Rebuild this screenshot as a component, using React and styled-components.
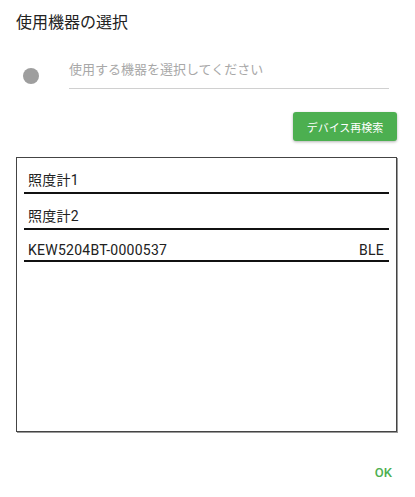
import React from 'react'
import styled, { createGlobalStyle } from 'styled-components'

const GlobalStyle = createGlobalStyle`
  html, body {
    margin: 0;
    padding: 0;
    background: #fff;
  }
  body {
    font-family: Roboto, "Noto Sans CJK JP", sans-serif;
    color: #212121;
  }
`

const Dialog = styled.div`
  width: 415px;
  height: 497px;
  box-sizing: border-box;
  padding: 0 18px 0 16px;
  display: flex;
  flex-direction: column;
`

const Title = styled.h2`
  margin: 0;
  padding-top: 12px;
  font-size: 16px;
  font-weight: 400;
  line-height: 22px;
  color: #222;
`

const PickerRow = styled.div`
  display: flex;
  align-items: center;
  margin-top: 21px;
  padding-left: 7px;
`

const Dot = styled.span`
  width: 16px;
  height: 16px;
  border-radius: 50%;
  background: #9e9e9e;
  flex: none;
  margin-top: 8px;
`

const Picker = styled.div`
  flex: 1;
  margin-left: 30px;
  margin-right: 8px;
  padding: 6px 0 9px;
  border-bottom: 1px solid #d0d0d0;
  font-size: 13px;
  line-height: 18px;
  color: #a8a8a8;
`

const Actions = styled.div`
  display: flex;
  justify-content: flex-end;
  margin-top: 23px;
`

const Button = styled.button`
  height: 29px;
  width: 104px;
  padding: 0;
  border: none;
  border-radius: 3px;
  background: #4caf50;
  color: #fff;
  font-family: inherit;
  font-size: 11px;
  box-shadow: 0 1px 3px rgba(0, 0, 0, 0.3);
`

const DeviceList = styled.div`
  margin-top: 16px;
  height: 275px;
  box-sizing: border-box;
  border: 1px solid #444;
  box-shadow: 1px 1px 0 #999;
  padding: 0 7px;
`

const DeviceRow = styled.div`
  display: flex;
  justify-content: space-between;
  padding: 12px 5px 2px 4px;
  border-bottom: 2px solid #111;
  font-size: 14px;
  letter-spacing: 0.25px;
  line-height: ${p => (p.$latin ? 16 : 20)}px;
  color: #212121;
`

const Footer = styled.div`
  display: flex;
  justify-content: flex-end;
  margin-top: 33px;
  padding-right: 5px;
`

const OkButton = styled.span`
  color: #4caf50;
  font-size: 13px;
  font-weight: 500;
`

const devices = [
  { name: '照度計1' },
  { name: '照度計2' },
  { name: 'KEW5204BT-0000537', type: 'BLE', latin: true },
]

export default function App() {
  return (
    <>
      <GlobalStyle />
      <Dialog>
        <Title>使用機器の選択</Title>
        <PickerRow>
          <Dot />
          <Picker>使用する機器を選択してください</Picker>
        </PickerRow>
        <Actions>
          <Button>デバイス再検索</Button>
        </Actions>
        <DeviceList>
          {devices.map(d => (
            <DeviceRow key={d.name} $latin={d.latin}>
              <span>{d.name}</span>
              {d.type && <span>{d.type}</span>}
            </DeviceRow>
          ))}
        </DeviceList>
        <Footer>
          <OkButton>OK</OkButton>
        </Footer>
      </Dialog>
    </>
  )
}
